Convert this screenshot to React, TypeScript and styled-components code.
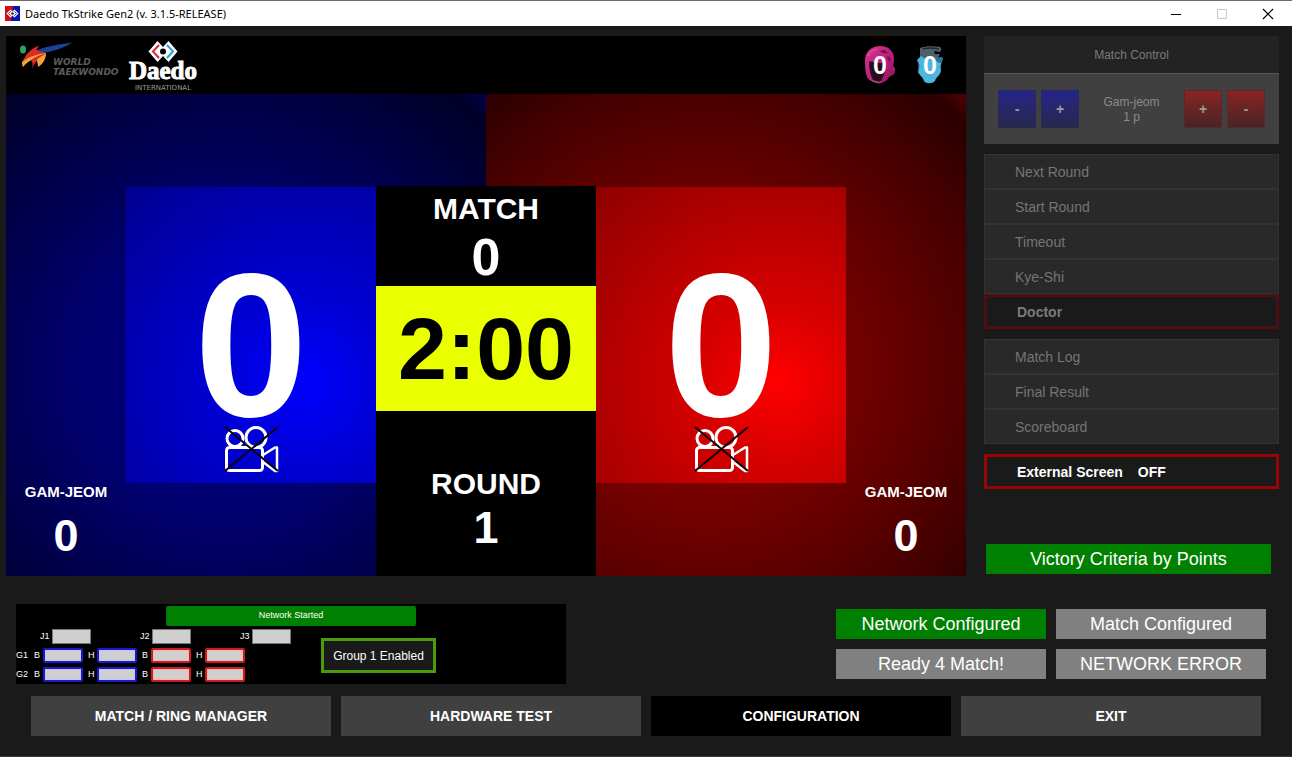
import React from 'react';
import styled, { createGlobalStyle } from 'styled-components';

const GlobalStyle = createGlobalStyle`
  *, *::before, *::after { box-sizing: border-box; }
  body {
    margin: 0;
    background: #1a1a1a;
    color: #fff;
    font-family: 'Liberation Sans', Arial, sans-serif;
  }
  button, input { font-family: inherit; margin: 0; }
`;

type Side = 'blue' | 'red';

const AppWindow = styled.div`
  display: flex;
  flex-direction: column;
  min-height: 100vh;
  background: #1a1a1a;
  border-bottom: 1px solid #3a3a3a;
`;

/* ---------- title bar ---------- */

const TitleBar = styled.header`
  display: flex;
  align-items: center;
  height: 26px;
  padding: 0 1px 0 5px;
  background: #fff;
  border-top: 1px solid #6b6b6b;
  color: #000;
`;

const WindowTitle = styled.h1`
  flex: 1;
  margin: 0 0 0 5px;
  font: 400 11px/24px 'Noto Sans', 'Open Sans', sans-serif;
`;

const WindowButton = styled.button`
  display: grid;
  place-items: center;
  width: 46px;
  height: 25px;
  padding: 0;
  border: 0;
  background: transparent;
  color: #000;
  &:disabled { color: #c8c8c8; }
`;

/* ---------- scoreboard ---------- */

const TopArea = styled.main`
  display: flex;
  gap: 18px;
  padding: 10px 13px 0 6px;
`;

const Scoreboard = styled.section`
  flex: 1;
  min-width: 0;
  display: flex;
  flex-direction: column;
`;

const BoardHeader = styled.div`
  display: flex;
  align-items: flex-start;
  height: 58px;
  padding: 4px 18px 0 12px;
  background: #000;
`;

const FederationLogo = styled.div`
  display: flex;
  width: 111px;
  color: #5c5c5c;
`;

const FederationName = styled.div`
  margin: 17px 0 0 -21px;
  font: italic 700 9px/10px 'DejaVu Sans', sans-serif;
`;

const BrandLogo = styled.div`
  display: flex;
  flex-direction: column;
  align-items: center;
  width: 68px;
`;

const BrandName = styled.div`
  margin-top: -6px;
  font: 700 25px/28px 'Liberation Serif', serif;
  -webkit-text-stroke: 1px #fff;
`;

const BrandTag = styled.div`
  color: #9a9a9a;
  font: 400 7px/7px 'DejaVu Sans', sans-serif;
`;

const SensorCounters = styled.div`
  display: flex;
  gap: 14px;
  margin: 5px 0 0 auto;
`;

const Counter = styled.div`
  display: grid;
  place-items: center;
  width: 36px;
  height: 40px;
  > * { grid-area: 1 / 1; }
`;

const CounterValue = styled.span`
  z-index: 1;
  font-size: 25px;
  line-height: 40px;
  font-weight: 700;
`;

const Arena = styled.div`
  flex: 1;
  display: grid;
  grid-template-columns: 120fr 250fr 220fr 250fr 120fr;
  align-items: end;
  min-height: 482px;
  background:
    radial-gradient(circle 354px at 46% 57%, #000084 0%, #000070 40%, #000056 62%, #00003e 82%, #000026 100%, #000050 107%) left / 50% 100% no-repeat,
    radial-gradient(circle 354px at 46% 57%, #880000 0%, #740000 40%, #5c0000 62%, #440000 82%, #2a0000 100%, #540000 107%) right / 50% 100% no-repeat;
`;

const Penalties = styled.div`
  padding-bottom: 16px;
  text-align: center;
  font-weight: 700;
`;

const PenaltyLabel = styled.div`
  font-size: 15px;
  line-height: 24px;
`;

const PenaltyValue = styled.div`
  margin-top: 8px;
  font-size: 45px;
  line-height: 48px;
`;

const ScorePanel = styled.div<{ $side: Side }>`
  display: flex;
  flex-direction: column;
  align-items: center;
  margin-bottom: 93px;
  padding: 83px 0 9px;
  background: ${({ $side }) =>
    $side === 'blue'
      ? 'radial-gradient(circle at 71% 66%, #0000ff 0, #0000fa 10px, #0000d8 75px, #0000a8 200px, #00008c 270px)'
      : 'radial-gradient(circle at 73% 66%, #ff0000 0, #fa0000 10px, #d80000 75px, #a80000 200px, #8c0000 270px)'};
`;

const Score = styled.div`
  font-size: 204px;
  line-height: 150px;
  font-weight: 700;
`;

const VideoIcon = styled.svg`
  display: block;
  margin: 6px 0 0 2px;
`;

const MatchInfo = styled.div`
  display: flex;
  flex-direction: column;
  text-align: center;
  font-weight: 700;
  background: #000;
`;

const InfoBlock = styled.div<{ $large?: boolean }>`
  display: flex;
  flex-direction: column;
  justify-content: flex-end;
  height: ${({ $large }) => ($large ? 165 : 100)}px;
  padding-bottom: ${({ $large }) => ($large ? 26 : 3)}px;
`;

const InfoLabel = styled.div`
  font-size: 30px;
  line-height: 44px;
`;

const InfoValue = styled.div<{ $size: number }>`
  font-size: ${({ $size }) => $size}px;
  line-height: ${({ $size }) => ($size > 50 ? 52 : 44)}px;
`;

const Clock = styled.div`
  background: #eaff00;
  color: #000;
  font-size: 88px;
  line-height: 125px;
`;

/* ---------- side bar ---------- */

const Sidebar = styled.aside`
  display: flex;
  flex-direction: column;
  gap: 10px;
  width: 295px;
`;

const ControlCard = styled.section`
  background: #404040;
  color: #8b8b8b;
`;

const ControlTitle = styled.h2`
  margin: 0;
  padding-top: 1px;
  background: #232323;
  border-bottom: 1px solid #595959;
  color: #7a7a7a;
  text-align: center;
  font-size: 12px;
  line-height: 36px;
  font-weight: 400;
`;

const ControlRow = styled.div`
  display: flex;
  align-items: center;
  gap: 5px;
  padding: 16px 14px;
`;

const ControlLabel = styled.div`
  flex: 1;
  padding-top: 1px;
  text-align: center;
  font-size: 12px;
  line-height: 15px;
`;

const PointButton = styled.button<{ $side: Side }>`
  width: 38px;
  height: 38px;
  padding: 0;
  border: 1px solid ${({ $side }) => ($side === 'blue' ? '#28285a' : '#5a2828')};
  background: ${({ $side }) =>
    $side === 'blue'
      ? 'linear-gradient(#25258a, #28284a)'
      : 'linear-gradient(#8a2424, #482424)'};
  color: #9c9c9c;
  font-size: 14px;
  font-weight: 700;
`;

const ActionList = styled.div`
  display: flex;
  flex-direction: column;
`;

const ActionButton = styled.button`
  height: 35px;
  padding: 0 30px;
  border: 1px solid #333;
  background: #292929;
  color: #757575;
  text-align: left;
  font-size: 14px;
`;

const AlertButton = styled.button<{ $active?: boolean }>`
  display: flex;
  align-items: center;
  gap: 15px;
  height: 35px;
  padding: 0 30px;
  border: 3px solid ${({ $active }) => ($active ? '#990505' : '#4d1010')};
  background: #1a1a1a;
  color: ${({ $active }) => ($active ? '#fff' : '#7a7a7a')};
  font-size: 14px;
  font-weight: 700;
`;

const StatusTag = styled.div<{ $on?: boolean }>`
  background: ${({ $on }) => ($on ? '#008000' : '#808080')};
  text-align: center;
  font-size: 18px;
  line-height: 30px;
`;

const VictoryCriteria = styled.div`
  margin: auto 8px 2px 2px;
`;

/* ---------- bottom area ---------- */

const BottomArea = styled.section`
  display: flex;
  justify-content: space-between;
  gap: 20px;
  padding: 28px 26px 0 16px;
`;

const NetworkPanel = styled.div`
  display: flex;
  flex-direction: column;
  width: 550px;
  height: 80px;
  padding-top: 2px;
  background: #000;
  font-size: 9px;
`;

const NetworkState = styled.div`
  align-self: center;
  width: 250px;
  border-radius: 2px;
  background: #008000;
  text-align: center;
  line-height: 18px;
  padding-bottom: 2px;
`;

const NetworkBody = styled.div`
  display: flex;
  align-items: flex-start;
`;

const DeviceTable = styled.div`
  display: flex;
  flex-direction: column;
  gap: 4px;
  width: 305px;
  padding-top: 3px;
`;

const JudgeRow = styled.div`
  display: flex;
  height: 15px;
  padding-left: 24px;
  gap: 49px;
`;

const DeviceRow = styled.div`
  display: flex;
  gap: 5px;
`;

const GroupName = styled.span`
  width: 13px;
  line-height: 15px;
`;

const DeviceLabel = styled.label<{ $wide?: boolean }>`
  display: flex;
  align-items: center;
  justify-content: space-between;
  width: ${({ $wide }) => ($wide ? 51 : 49)}px;
  line-height: 15px;
`;

const DeviceField = styled.input<{ $tone?: Side }>`
  width: ${({ $tone }) => ($tone ? 40 : 39)}px;
  height: 15px;
  padding: 0;
  border: ${({ $tone }) =>
    $tone === 'blue' ? '2px solid #1a1ac8' : $tone === 'red' ? '2px solid #c81e1e' : '1px solid #777'};
  border-radius: ${({ $tone }) => ($tone ? 2 : 0)}px;
  box-shadow: ${({ $tone }) =>
    $tone === 'blue' ? 'inset 0 0 0 1px #c4c4ff' : $tone === 'red' ? 'inset 0 0 0 1px #ffb0b0' : 'none'};
  background: #cfcfcf;
`;

const GroupButton = styled.button`
  width: 115px;
  height: 35px;
  margin-top: 12px;
  padding: 0;
  border: 3px solid #4c9a10;
  background: #1a1a1a;
  color: #fff;
  font-size: 12px;
`;

const StatusGrid = styled.div`
  display: grid;
  grid-template-columns: 210px 210px;
  align-content: start;
  gap: 10px;
  padding-top: 5px;
`;

const NavBar = styled.nav`
  display: flex;
  gap: 10px;
  padding: 12px 31px 20px;
`;

const NavButton = styled.button<{ $active?: boolean }>`
  flex: 1;
  height: 40px;
  padding: 0;
  border: 0;
  background: ${({ $active }) => ($active ? '#000' : '#404040')};
  color: #fff;
  font-size: 14px;
  font-weight: 700;
`;

/* ---------- drawings ---------- */

const AppIcon = () => (
  <svg width="15" height="15" viewBox="0 0 15 15" aria-hidden="true">
    <rect width="15" height="15" fill="#0a12b0" />
    <path d="M0 0H8L6 15H0z" fill="#d01018" />
    <path d="M5.5 3.5 1.5 7.5l4 4 2-2 2 2 4-4-4-4-2 2z" fill="#fff" />
    <path d="M5.7 5.3 3.5 7.5l2.200 2.200" fill="none" stroke="#d01018" strokeWidth="1" />
    <path d="M9.300 5.300 11.500 7.500 9.300 9.700" fill="none" stroke="#2030b0" strokeWidth="1" />
    <circle cx="7.500" cy="7.500" r="1.300" fill="#222" />
  </svg>
);

const TaekwondoMark = () => (
  <svg width="56" height="30" viewBox="0 0 56 30" aria-hidden="true">
    <ellipse cx="5" cy="9.500" rx="3" ry="4" fill="#2ea35a" />
    <path d="M17 11.500C24 7 38 5 54 2.500 48 7 38 10.500 27 12.500L17 13z" fill="#1f4098" />
    <path d="M5 21C8 13 14 8.500 21 5.500L18.500 10C23 12 26 12.500 29 12.500 20 14.500 11 18 4 23z" fill="#dc2a2a" />
    <path d="M4 22C10 17 18 14.500 28 13 28 19 25 24 20 27 20 23 19 20 17 19 12 20 8 23 5 27 4 25 4 24 4 22z" fill="#f2a43a" />
    <path d="M13 20C17 17 23 14.500 28 13.500L20 18.500 14 28C15 25 15 22 13 20z" fill="#dc2a2a" />
  </svg>
);

const BrandMark = () => (
  <svg width="30" height="23" viewBox="0 0 30 23" aria-hidden="true">
    <path d="M9.500 1 0.500 11.500 9.500 22 15 16 20.500 22 29.500 11.500 20.500 1 15 7z" fill="#fff" />
    <path d="M11 5 5 11.500 11 18" fill="none" stroke="#dc2a35" strokeWidth="2" />
    <path d="M19 5 25 11.500 19 18" fill="none" stroke="#2b9fd8" strokeWidth="2" />
    <circle cx="15" cy="11.500" r="3" fill="#000" />
  </svg>
);

const Helmet = () => (
  <svg width="32" height="40" viewBox="0 0 32 40" aria-hidden="true">
    <defs>
      <linearGradient id="helmetShade" x1="0" y1="0" x2="1" y2="1">
        <stop offset="0" stopColor="#d6388f" />
        <stop offset="0.500" stopColor="#bd1f7c" />
        <stop offset="1" stopColor="#8c1460" />
      </linearGradient>
    </defs>
    <path d="M1 14C2 6 8 1 16 1 25 1 31 7 30 16 30 18 29 20 29 21 32 22 32 28 29 30 27 31 26 31 25 32 23 36 19 38 15 38.500 11 38.500 5 35 3 32 1 27 1 20 1 14z" fill="url(#helmetShade)" />
    <path d="M5 17C7 15 10 18 12 18L19 18C22 18 22 22 21 26 20 31 18 34 16 37L9 35C7 31 5 24 5 17z" fill="#2a0a1c" />
    <path d="M4 33C8 36 13 38 17 37" fill="none" stroke="#77707a" strokeWidth="1" />
    <path d="M16 6C19 4 22 5 24 8 21 9 18 8 16 6zM23 11C26 11 27 14 26 17 24 16 23 14 23 11z" fill="#7c1054" />
    <path d="M4 11C6 7 9 5 13 4" fill="none" stroke="#e569ad" strokeWidth="1" />
  </svg>
);

const Vest = () => (
  <svg width="28" height="40" viewBox="0 0 28 40" aria-hidden="true">
    <path d="M4 3C9 1 17 1 24 2 26 3 25 6 24 7L18 6 19 9 24 9C22 13 19 15 14 15 9 15 5 14 4 12z" fill="#4f5f6b" />
    <path d="M7 4C12 2.500 18 3 23 4" fill="none" stroke="#1d2a33" strokeWidth="1.500" />
    <path d="M5 11C9 14 15 16 19 13 22 13 25 12 27 13 26 17 24 20 25 25 25 30 20 32 19 36 16 39 10 39 8 36 7 32 3 30 2 27 3 22 3 17 1 15z" fill="#4db6dd" />
    <path d="M18 13C21 12 24 12 27 13L25 18C22 18 20 16 18 13z" fill="#2a7597" />
    <path d="M1 15 3 20 2 27" fill="none" stroke="#245b7b" strokeWidth="1" />
  </svg>
);

const VideoUnavailable = () => (
  <VideoIcon width="56" height="48" viewBox="0 0 56 48" role="img" aria-label="Video replay unavailable">
    <g fill="none" stroke="#fff" strokeWidth="3" strokeLinejoin="round">
      <circle cx="11" cy="12.500" r="8" />
      <circle cx="32" cy="11.500" r="10" />
      <rect x="2.500" y="21.500" width="36" height="23" rx="3" />
      <path d="M39 29 51 21.500H53V45H51L39 36" strokeWidth="2.500" />
    </g>
    <path d="M1 1 54 45M54 1 1 45" fill="none" stroke="#080808" strokeWidth="2" />
  </VideoIcon>
);

/* ---------- composed parts ---------- */

const PenaltyBox = () => (
  <Penalties>
    <PenaltyLabel>GAM-JEOM</PenaltyLabel>
    <PenaltyValue>0</PenaltyValue>
  </Penalties>
);

const ScoreBox = ({ side }: { side: Side }) => (
  <ScorePanel $side={side}>
    <Score>0</Score>
    <VideoUnavailable />
  </ScorePanel>
);

const Device = ({ label, tone }: { label: string; tone?: Side }) => (
  <DeviceLabel $wide={!tone}>
    {label}
    <DeviceField $tone={tone} readOnly tabIndex={-1} />
  </DeviceLabel>
);

const devices: { label: string; tone: Side }[] = [
  { label: 'B', tone: 'blue' },
  { label: 'H', tone: 'blue' },
  { label: 'B', tone: 'red' },
  { label: 'H', tone: 'red' },
];

export default function App() {
  return (
    <AppWindow>
      <GlobalStyle />
      <TitleBar>
        <AppIcon />
        <WindowTitle>Daedo TkStrike Gen2 (v. 3.1.5-RELEASE)</WindowTitle>
        <WindowButton aria-label="Minimize">
          <svg width="12" height="12" viewBox="0 0 12 12"><path d="M1 6.500H11" stroke="currentColor" /></svg>
        </WindowButton>
        <WindowButton aria-label="Maximize" disabled>
          <svg width="12" height="12" viewBox="0 0 12 12"><path d="M1.500 1.500H10.500V10.500H1.500z" fill="none" stroke="currentColor" /></svg>
        </WindowButton>
        <WindowButton aria-label="Close">
          <svg width="12" height="12" viewBox="0 0 12 12"><path d="M1 1 11 11M11 1 1 11" stroke="currentColor" strokeWidth="1.200" /></svg>
        </WindowButton>
      </TitleBar>

      <TopArea>
        <Scoreboard>
          <BoardHeader>
            <FederationLogo>
              <TaekwondoMark />
              <FederationName>
                <div>WORLD</div>
                <div>TAEKWONDO</div>
              </FederationName>
            </FederationLogo>
            <BrandLogo>
              <BrandMark />
              <BrandName>Daedo</BrandName>
              <BrandTag>INTERNATIONAL</BrandTag>
            </BrandLogo>
            <SensorCounters>
              <Counter>
                <Helmet />
                <CounterValue>0</CounterValue>
              </Counter>
              <Counter>
                <Vest />
                <CounterValue>0</CounterValue>
              </Counter>
            </SensorCounters>
          </BoardHeader>
          <Arena>
            <PenaltyBox />
            <ScoreBox side="blue" />
            <MatchInfo>
              <InfoBlock>
                <InfoLabel>MATCH</InfoLabel>
                <InfoValue $size={52}>0</InfoValue>
              </InfoBlock>
              <Clock>2:00</Clock>
              <InfoBlock $large>
                <InfoLabel>ROUND</InfoLabel>
                <InfoValue $size={45}>1</InfoValue>
              </InfoBlock>
            </MatchInfo>
            <ScoreBox side="red" />
            <PenaltyBox />
          </Arena>
        </Scoreboard>

        <Sidebar>
          <ControlCard>
            <ControlTitle>Match Control</ControlTitle>
            <ControlRow>
              <PointButton $side="blue">-</PointButton>
              <PointButton $side="blue">+</PointButton>
              <ControlLabel>
                Gam-jeom
                <br />1 p
              </ControlLabel>
              <PointButton $side="red">+</PointButton>
              <PointButton $side="red">-</PointButton>
            </ControlRow>
          </ControlCard>
          <ActionList>
            <ActionButton>Next Round</ActionButton>
            <ActionButton>Start Round</ActionButton>
            <ActionButton>Timeout</ActionButton>
            <ActionButton>Kye-Shi</ActionButton>
            <AlertButton>Doctor</AlertButton>
          </ActionList>
          <ActionList>
            <ActionButton>Match Log</ActionButton>
            <ActionButton>Final Result</ActionButton>
            <ActionButton>Scoreboard</ActionButton>
          </ActionList>
          <AlertButton $active>
            <span>External Screen</span>
            <span>OFF</span>
          </AlertButton>
          <VictoryCriteria>
            <StatusTag $on>Victory Criteria by Points</StatusTag>
          </VictoryCriteria>
        </Sidebar>
      </TopArea>

      <BottomArea>
        <NetworkPanel>
          <NetworkState>Network Started</NetworkState>
          <NetworkBody>
            <DeviceTable>
              <JudgeRow>
                <Device label="J1" />
                <Device label="J2" />
                <Device label="J3" />
              </JudgeRow>
              {['G1', 'G2'].map((group) => (
                <DeviceRow key={group}>
                  <GroupName>{group}</GroupName>
                  {devices.map((device, index) => (
                    <Device key={index} label={device.label} tone={device.tone} />
                  ))}
                </DeviceRow>
              ))}
            </DeviceTable>
            <GroupButton>Group 1 Enabled</GroupButton>
          </NetworkBody>
        </NetworkPanel>
        <StatusGrid>
          <StatusTag $on>Network Configured</StatusTag>
          <StatusTag>Match Configured</StatusTag>
          <StatusTag>Ready 4 Match!</StatusTag>
          <StatusTag>NETWORK ERROR</StatusTag>
        </StatusGrid>
      </BottomArea>

      <NavBar>
        <NavButton>MATCH / RING MANAGER</NavButton>
        <NavButton>HARDWARE TEST</NavButton>
        <NavButton $active>CONFIGURATION</NavButton>
        <NavButton>EXIT</NavButton>
      </NavBar>
    </AppWindow>
  );
}
